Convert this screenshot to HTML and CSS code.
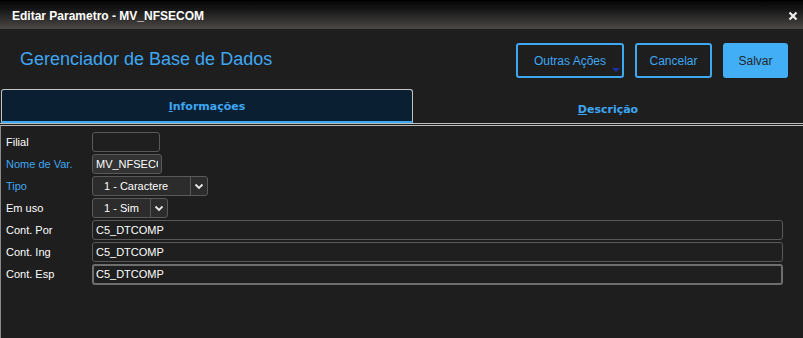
FILE: index.html
```html
<!DOCTYPE html>
<html lang="pt">
<head>
<meta charset="utf-8">
<title>Editar Parametro</title>
<link rel="stylesheet" href="styles.css">
</head>
<body>
<div class="dialog">
  <div class="titlebar">
    <span class="title">Editar Parametro - MV_NFSECOM</span>
    <svg class="close" width="10" height="10" viewBox="0 0 10 10"><path d="M1.5 1.5 L8.5 8.5 M8.5 1.5 L1.5 8.5" stroke="#f0f0f0" stroke-width="2.2"/></svg>
  </div>
  <div class="header">
    <h1 class="app-title">Gerenciador de Base de Dados</h1>
    <div class="actions">
      <button class="btn btn-outline btn-more">Outras Ações<span class="caret"></span></button>
      <button class="btn btn-outline btn-cancel">Cancelar</button>
      <button class="btn btn-primary">Salvar</button>
    </div>
  </div>
  <div class="tabs">
    <div class="tab tab-active"><span><u>I</u>nformações</span></div>
    <div class="tab tab-other"><span><u>D</u>escrição</span></div>
  </div>
  <div class="panel">
    <div class="row"><label class="lbl">Filial</label><input class="field w-filial" type="text" value=""></div>
    <div class="row"><label class="lbl lbl-blue">Nome de Var.</label><input class="field field-ro w-nome" type="text" value="MV_NFSECOM" readonly></div>
    <div class="row"><label class="lbl lbl-blue">Tipo</label>
      <div class="select w-tipo"><span class="sel-text">1 - Caractere</span><span class="sel-btn"><svg width="10" height="7" viewBox="0 0 10 7"><path d="M1.5 1.5 L5 5 L8.5 1.5" fill="none" stroke="#e8e8e8" stroke-width="1.8"/></svg></span></div>
    </div>
    <div class="row"><label class="lbl">Em uso</label>
      <div class="select w-uso"><span class="sel-text">1 - Sim</span><span class="sel-btn"><svg width="10" height="7" viewBox="0 0 10 7"><path d="M1.5 1.5 L5 5 L8.5 1.5" fill="none" stroke="#e8e8e8" stroke-width="1.8"/></svg></span></div>
    </div>
    <div class="row"><label class="lbl">Cont. Por</label><input class="field w-full" type="text" value="C5_DTCOMP"></div>
    <div class="row"><label class="lbl">Cont. Ing</label><input class="field w-full" type="text" value="C5_DTCOMP"></div>
    <div class="row"><label class="lbl">Cont. Esp</label><input class="field field-focus w-full" type="text" value="C5_DTCOMP"></div>
  </div>
</div>
</body>
</html>
```

FILE: styles.css
```css
* { box-sizing: border-box; }
html, body {
  margin: 0;
  padding: 0;
  background: #1e1e1e;
  width: 803px;
  height: 338px;
  overflow: hidden;
  font-family: "Liberation Sans", Arial, sans-serif;
}
.dialog {
  display: flex;
  flex-direction: column;
  height: 338px;
}
.titlebar {
  height: 29px;
  display: flex;
  align-items: center;
  justify-content: space-between;
  padding: 1px 5px 0 12px;
  background: linear-gradient(to bottom, #050505 0%, #1a1a1a 35%, #4b4845 100%);
  border-top: 1px solid #000;
}
.title {
  color: #fff;
  font-weight: bold;
  font-size: 12px;
}
.close { display: block; }
.header {
  height: 60px;
  display: flex;
  align-items: flex-start;
  justify-content: space-between;
  padding: 14px 15px 0 20px;
}
.app-title {
  margin: 6px 0 0;
  font-weight: normal;
  font-size: 18px;
  color: #3ea7f3;
}
.actions {
  display: flex;
  gap: 11px;
}
.btn {
  height: 35px;
  font-family: "Liberation Sans", Arial, sans-serif;
  font-size: 12px;
  border-radius: 3px;
  padding: 0;
  position: relative;
}
.btn-outline {
  background: #1e1e1e;
  color: #3ea7f3;
  border: 2px solid #3ea7f3;
}
.btn-more { width: 108px; }
.btn-cancel { width: 77px; }
.btn-primary {
  width: 65px;
  background: #42aef6;
  border: 0;
  color: #23272c;
}
.caret {
  position: absolute;
  right: 2px;
  bottom: 4px;
  width: 0;
  height: 0;
  border-left: 4px solid transparent;
  border-right: 4px solid transparent;
  border-top: 4px solid #1b2fa8;
}
.tabs {
  display: flex;
  height: 35px;
  border-bottom: 1px solid #bdbdbd;
  padding-left: 1px;
}
.tab {
  display: flex;
  align-items: center;
  justify-content: center;
  font-family: "DejaVu Sans", Verdana, sans-serif;
  font-weight: bold;
  font-size: 11px;
  color: #3ea7f3;
}
.tab-active {
  width: 412px;
  background: #0a1f31;
  border: 1px solid #c4c4c4;
  border-bottom: 2px solid #3aa8f5;
  border-radius: 3px 3px 0 0;
  padding-top: 1px;
}
.tab-other {
  flex: 1;
  padding-top: 6px;
}
.panel {
  flex: 1;
  margin-top: 1px;
  border-top: 1px solid #bdbdbd;
  border-left: 1px solid #8a8a8a;
  padding: 6px 20px 0 5px;
  display: flex;
  flex-direction: column;
  gap: 2px;
}
.row {
  display: flex;
  align-items: center;
  height: 20px;
}
.lbl {
  width: 86px;
  font-size: 11px;
  color: #fff;
  flex: none;
}
.lbl-blue { color: #3ea7f3; }
.field {
  height: 20px;
  margin: 0;
  border: 1px solid #595959;
  border-radius: 3px;
  background: #1f1f1f;
  color: #fff;
  font-family: "Liberation Sans", Arial, sans-serif;
  font-size: 11px;
  padding: 0 3px;
  outline: none;
  min-width: 0;
}
.field-ro { background: #333; }
.field-focus {
  height: 21px;
  border: 2px solid #6e6e6e;
  padding: 0 2px;
}
.w-filial { width: 68px; }
.w-nome { width: 70px; }
.w-full { flex: 1; }
.select {
  height: 20px;
  display: flex;
  border: 1px solid #595959;
  border-radius: 3px;
  background: #2c2c2c;
  color: #fff;
  font-size: 11px;
}
.w-tipo { width: 116px; }
.w-uso { width: 76px; }
.sel-text {
  flex: 1;
  padding-left: 11px;
  line-height: 18px;
}
.sel-btn {
  width: 17px;
  border-left: 1px solid #595959;
  display: flex;
  align-items: center;
  justify-content: center;
}
```
